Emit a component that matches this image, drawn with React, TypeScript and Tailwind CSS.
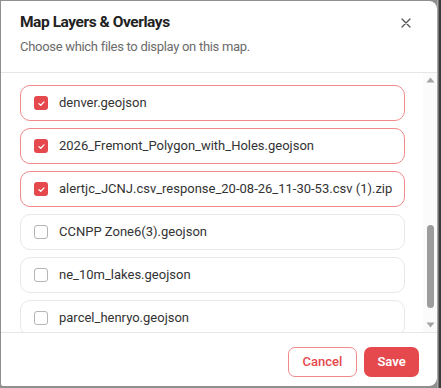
import React from "react";

const items = [
  { name: "denver.geojson", on: true },
  { name: "2026_Fremont_Polygon_with_Holes.geojson", on: true },
  { name: "alertjc_JCNJ.csv_response_20-08-26_11-30-53.csv (1).zip", on: true },
  { name: "CCNPP Zone6(3).geojson", on: false },
  { name: "ne_10m_lakes.geojson", on: false },
  { name: "parcel_henryo.geojson", on: false },
];

function Check({ on }: { on: boolean }) {
  if (on) {
    return (
      <div className="w-[14px] h-[14px] rounded-[3px] bg-[#e5484d] flex items-center justify-center shrink-0">
        <svg width="9" height="9" viewBox="0 0 10 10" fill="none">
          <path d="M2.2 5.2 L4.2 7 L7.8 3.2" stroke="white" strokeWidth="1.4" strokeLinecap="round" strokeLinejoin="round" />
        </svg>
      </div>
    );
  }
  return <div className="w-[14px] h-[14px] rounded-[3px] border border-[#b5b5b5] bg-white shrink-0" />;
}

export default function App() {
  return (
    <div
      className="w-[441px] h-[388px] pt-px pl-px bg-[linear-gradient(to_right,#8f8f8f_437px,#a9a9a9_437px,#a9a9a9_438px,#3d3d3d_439px)]"
      style={{ fontFamily: "Roboto, 'Noto Sans', sans-serif" }}
    >
      <div className="w-[436px] h-[385px] bg-white rounded-r-[8px] rounded-bl-[2px] flex flex-col overflow-hidden">
        <div className="h-[72px] shrink-0 border-b border-[#e6e6e6] px-[19px] pt-[9px] relative">
          <div className="text-[15.5px] leading-[24px] font-bold text-[#222] tracking-[-0.45px]">Map Layers &amp; Overlays</div>
          <div className="mt-[3px] text-[13px] leading-[20px] text-[#6b6b6b] tracking-[-0.3px]">Choose which files to display on this map.</div>
          <button className="absolute right-[26px] top-[17px] w-[10px] h-[10px] flex items-center justify-center">
            <svg width="10" height="10" viewBox="0 0 10 10" fill="none">
              <path d="M1 1 L9 9 M9 1 L1 9" stroke="#555" strokeWidth="1.3" strokeLinecap="round" />
            </svg>
          </button>
        </div>
        <div className="relative h-[259px] shrink-0 overflow-hidden">
          <div className="pt-[12px] pl-[19px] w-[404px] flex flex-col gap-[7px]">
            {items.map((it) => (
              <div
                key={it.name}
                className={`h-[36px] shrink-0 rounded-[10px] border flex items-center pl-[13px] gap-[11px] ${
                  it.on ? "border-[#f08a8a]" : "border-[#e8e8e8]"
                }`}
              >
                <Check on={it.on} />
                <span className="text-[13px] text-[#333] whitespace-nowrap">{it.name}</span>
              </div>
            ))}
          </div>
          <div className="absolute right-0 top-0 bottom-0 w-[14px] bg-[#fbfbfb]">
            <svg className="absolute left-[3px] top-[4px]" width="9" height="6" viewBox="0 0 9 6">
              <path d="M4.5 0.5 L8.5 5.5 L0.5 5.5 Z" fill="#a3a3a3" />
            </svg>
            <div className="absolute left-[4px] top-[152px] w-[7px] h-[83px] rounded-full bg-[#9d9d9d]" />
            <svg className="absolute left-[3px] bottom-[4px]" width="9" height="6" viewBox="0 0 9 6">
              <path d="M0.5 0.5 L8.5 0.5 L4.5 5.5 Z" fill="#a3a3a3" />
            </svg>
          </div>
        </div>
        <div className="flex-1 border-t border-[#e6e6e6] flex items-start justify-end pt-[14px] pr-[18px] gap-[7px]">
          <button className="h-[30px] w-[69px] rounded-[7px] border border-[#ee8a8a] text-[#e5484d] text-[13px] font-medium bg-white">Cancel</button>
          <button className="h-[30px] w-[55px] rounded-[7px] bg-[#e5484d] text-white text-[13px] font-semibold">Save</button>
        </div>
      </div>
    </div>
  );
}
